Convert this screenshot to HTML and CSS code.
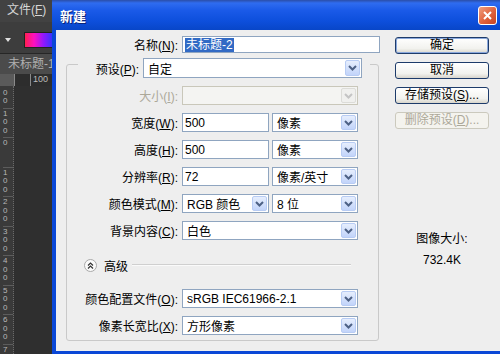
FILE: index.html
```html
<!DOCTYPE html>
<html lang="zh-CN">
<head>
  <meta charset="UTF-8">
  <title>新建</title>
  <link rel="stylesheet" href="styles.css">
</head>
<body>
  <div class="screen">
    <div class="ps">
      <div class="ps-menu">文件(<u>F</u>)</div>
      <div class="ps-tools"><span class="caret"></span><span class="swatch"></span></div>
      <div class="ps-tab">未标题-1</div>
      <div class="ps-hruler">
        <span class="corner"></span>
        <span class="tick"></span>
        <span class="tick t100">100</span>
      </div>
      <div class="ps-work">
        <div class="vruler">
          <div class="vmark first">2<br>0<br>0</div>
          <div class="vmark">1<br>0<br>0</div>
          <div class="vmark">0</div>
          <div class="vmark">1<br>0<br>0</div>
          <div class="vmark">2<br>0<br>0</div>
          <div class="vmark">3<br>0<br>0</div>
          <div class="vmark">4<br>0<br>0</div>
          <div class="vmark">5<br>0<br>0</div>
          <div class="vmark">6<br>0<br>0</div>
          <div class="vmark">7<br>0<br>0</div>
        </div>
        <div class="canvas"></div>
      </div>
    </div>

    <div class="dialog">
      <div class="titlebar">
        <span class="title">新建</span>
        <span class="close">
          <svg width="9" height="9" viewBox="0 0 9 9"><path d="M1 1l7 7M8 1l-7 7" stroke="#fff" stroke-width="2"/></svg>
        </span>
      </div>

      <div class="dlg-body">
        <div class="pane">
          <div class="row name-row">
            <span class="lbl">名称(<u>N</u>):</span>
            <div class="field name-field"><span class="sel">未标题-2</span></div>
          </div>

          <div class="group">
            <div class="row preset-row">
              <span class="lbl">预设(<u>P</u>):</span>
              <div class="combo preset"><span>自定</span><i class="arr"><svg width="9" height="6" viewBox="0 0 9 6"><path d="M1 1l3.5 3.5L8 1" fill="none" stroke="#4d6185" stroke-width="2"/></svg></i></div>
            </div>

            <div class="row off">
              <span class="lbl">大小(<u>I</u>):</span>
              <div class="combo wide disabled"><span></span><i class="arr"><svg width="9" height="6" viewBox="0 0 9 6"><path d="M1 1l3.5 3.5L8 1" fill="none" stroke="#c4c4c4" stroke-width="2"/></svg></i></div>
            </div>

            <div class="row">
              <span class="lbl">宽度(<u>W</u>):</span>
              <div class="field half">500</div>
              <div class="combo half unit"><span>像素</span><i class="arr"><svg width="9" height="6" viewBox="0 0 9 6"><path d="M1 1l3.5 3.5L8 1" fill="none" stroke="#4d6185" stroke-width="2"/></svg></i></div>
            </div>

            <div class="row">
              <span class="lbl">高度(<u>H</u>):</span>
              <div class="field half">500</div>
              <div class="combo half unit"><span>像素</span><i class="arr"><svg width="9" height="6" viewBox="0 0 9 6"><path d="M1 1l3.5 3.5L8 1" fill="none" stroke="#4d6185" stroke-width="2"/></svg></i></div>
            </div>

            <div class="row">
              <span class="lbl">分辨率(<u>R</u>):</span>
              <div class="field half">72</div>
              <div class="combo half unit"><span>像素/英寸</span><i class="arr"><svg width="9" height="6" viewBox="0 0 9 6"><path d="M1 1l3.5 3.5L8 1" fill="none" stroke="#4d6185" stroke-width="2"/></svg></i></div>
            </div>

            <div class="row">
              <span class="lbl">颜色模式(<u>M</u>):</span>
              <div class="combo half"><span>RGB 颜色</span><i class="arr"><svg width="9" height="6" viewBox="0 0 9 6"><path d="M1 1l3.5 3.5L8 1" fill="none" stroke="#4d6185" stroke-width="2"/></svg></i></div>
              <div class="combo half unit"><span>8 位</span><i class="arr"><svg width="9" height="6" viewBox="0 0 9 6"><path d="M1 1l3.5 3.5L8 1" fill="none" stroke="#4d6185" stroke-width="2"/></svg></i></div>
            </div>

            <div class="row">
              <span class="lbl">背景内容(<u>C</u>):</span>
              <div class="combo wide"><span>白色</span><i class="arr"><svg width="9" height="6" viewBox="0 0 9 6"><path d="M1 1l3.5 3.5L8 1" fill="none" stroke="#4d6185" stroke-width="2"/></svg></i></div>
            </div>

            <div class="adv">
              <svg width="13" height="13" viewBox="0 0 13 13"><circle cx="6.5" cy="6.5" r="6" fill="#fafafa" stroke="#a8a8a8"/><path d="M4 6.5l2.5-2.5L9 6.5M4 9.5l2.5-2.5L9 9.5" fill="none" stroke="#333" stroke-width="1.2"/></svg>
              <span class="adv-text">高级</span>
              <span class="adv-line"></span>
            </div>

            <div class="row profile">
              <span class="lbl">颜色配置文件(<u>O</u>):</span>
              <div class="combo wide"><span>sRGB IEC61966-2.1</span><i class="arr"><svg width="9" height="6" viewBox="0 0 9 6"><path d="M1 1l3.5 3.5L8 1" fill="none" stroke="#4d6185" stroke-width="2"/></svg></i></div>
            </div>

            <div class="row">
              <span class="lbl">像素长宽比(<u>X</u>):</span>
              <div class="combo wide"><span>方形像素</span><i class="arr"><svg width="9" height="6" viewBox="0 0 9 6"><path d="M1 1l3.5 3.5L8 1" fill="none" stroke="#4d6185" stroke-width="2"/></svg></i></div>
            </div>
          </div>
        </div>

        <div class="side">
          <button class="btn default">确定</button>
          <button class="btn">取消</button>
          <button class="btn">存储预设(<u>S</u>)...</button>
          <button class="btn" disabled>删除预设(<u>D</u>)...</button>
          <div class="info">
            <div>图像大小:</div>
            <div class="size">732.4K</div>
          </div>
        </div>
      </div>
    </div>
  </div>
</body>
</html>
```

FILE: styles.css
```css
* {
  box-sizing: border-box;
}
body {
  margin: 0;
  width: 500px;
  height: 354px;
  overflow: hidden;
  background: #2e2e2e;
  font-family: "Liberation Sans", "Noto Sans CJK SC", sans-serif;
  font-size: 12px;
}
.screen {
  display: flex;
  height: 354px;
}

/* photoshop behind the dialog */
.ps {
  width: 52px;
  flex: none;
  display: flex;
  flex-direction: column;
  overflow: hidden;
  color: #d6d6d6;
}
.ps > div {
  flex: none;
}
.ps-menu {
  height: 22px;
  background: #424242;
  padding: 3px 0 0 7px;
  line-height: 15px;
  white-space: nowrap;
}
.ps-tools {
  height: 32px;
  background: #3d3d3d;
  border-bottom: 1px solid #262626;
  display: flex;
  align-items: center;
  padding: 4px 0 0 5px;
}
.caret {
  width: 0;
  border-left: 3px solid transparent;
  border-right: 3px solid transparent;
  border-top: 4px solid #e0e0e0;
}
.swatch {
  width: 32px;
  height: 16px;
  margin-left: 13px;
  flex: none;
  border: 1px solid #222;
  background: linear-gradient(90deg, #ff2050, #ff10c0 30%, #9018ff 62%, #1a3cff);
}
.ps-tab {
  height: 20px;
  background: #4b4b4b;
  color: #b0b0b0;
  padding-left: 8px;
  line-height: 20px;
  white-space: nowrap;
}
.ps-hruler {
  height: 12px;
  background: #2d2d2d;
  display: flex;
  font-size: 9px;
  color: #bcbcbc;
  line-height: 11px;
}
.corner {
  width: 14px;
  background: #5a5a5a;
}
.tick {
  width: 16px;
  border-left: 1px solid #8a8a8a;
  padding-left: 2px;
}
.ps .ps-work {
  flex: 1;
  min-height: 0;
  overflow: hidden;
  display: flex;
}
.vruler {
  width: 14px;
  background: #3a3a3a;
  border-right: 1px dotted #6a6a6a;
  overflow: hidden;
  font-size: 8px;
  line-height: 8.5px;
  color: #b8b8b8;
  padding-left: 3px;
}
.vmark {
  height: 29.5px;
  border-top: 1px solid #5c5c5c;
  padding-top: 1px;
}
.vmark.first {
  margin-top: -8px;
}
.canvas {
  flex: 1;
  background: #2f2f2f;
}

/* the dialog window */
.dialog {
  width: 452px;
  flex: none;
  height: 354px;
  display: flex;
  flex-direction: column;
  background: #eeeeee;
  border-left: 4px solid #0a47d6;
  border-bottom: 3px solid #0a47d6;
  color: #000;
}
.titlebar {
  height: 30px;
  flex: none;
  margin-left: -4px;
  display: flex;
  align-items: center;
  justify-content: space-between;
  padding: 0 7px 0 8px;
  background: linear-gradient(#2b4ea8 0, #2f6cf0 10%, #1a5ae8 35%, #0d4fdc 70%, #0846c8 100%);
}
.title {
  color: #fff;
  font-weight: bold;
  font-size: 13px;
  text-shadow: 1px 1px #0a2478;
}
.close {
  width: 19px;
  height: 19px;
  border: 1px solid #fff;
  border-radius: 3px;
  background: linear-gradient(135deg, #f0a080, #e0613c 55%, #c84420);
  display: flex;
  align-items: center;
  justify-content: center;
}
.dlg-body {
  flex: 1;
  display: flex;
}

.pane {
  width: 324px;
  padding-left: 10px;
}
.row {
  display: flex;
  align-items: center;
  height: 19px;
  margin-top: 8px;
}
.lbl {
  width: 115px;
  flex: none;
  text-align: right;
  padding-right: 4px;
  white-space: nowrap;
}
.name-row {
  margin-top: 6px;
  height: 17px;
}
.name-row .lbl {
  width: 116px;
}
.field {
  height: 100%;
  background: #fff;
  border: 1px solid #8fa5c0;
  padding-left: 2px;
  display: flex;
  align-items: center;
}
.name-field {
  width: 198px;
}
.sel {
  background: #316ac5;
  color: #fff;
  padding: 0 1px;
  line-height: 14px;
}
.half {
  width: 87px;
  flex: none;
}
.unit {
  margin-left: 3px;
  width: 86px;
}
.wide {
  width: 176px;
}

.group {
  margin-top: 11px;
  width: 313px;
  border: 1px solid #c9c9c9;
  border-radius: 3px;
  padding-bottom: 5px;
}
.preset-row {
  margin: -7px 0 0 11px;
  width: 292px;
  height: 20px;
  background: #eeeeee;
}
.preset-row .lbl {
  width: 65px;
}
.preset {
  width: 219px;
}

.combo {
  height: 100%;
  background: #fff;
  border: 1px solid #8fa5c0;
  display: flex;
  align-items: center;
  justify-content: space-between;
  padding: 1px;
  padding-left: 4px;
  white-space: nowrap;
}
.arr {
  width: 15px;
  height: 100%;
  border: 1px solid #b8ccf4;
  border-radius: 2px;
  background: linear-gradient(#e6eefd, #c2d4fa);
  display: flex;
  align-items: center;
  justify-content: center;
}
.off .lbl {
  color: #aca899;
}
.combo.disabled {
  background: #f4f4f2;
  border-color: #c9c7ba;
}
.combo.disabled .arr {
  background: #f0f0ee;
  border-color: #dcdcd8;
}

.adv {
  display: flex;
  align-items: center;
  height: 14px;
  margin: 18px 0 0 17px;
}
.adv-text {
  margin-left: 7px;
}
.adv-line {
  width: 219px;
  margin-left: 4px;
  border-top: 1px solid #cfcfcf;
  border-bottom: 1px solid #fafafa;
}
.profile {
  margin-top: 17px;
}

/* buttons on the right */
.side {
  width: 94px;
  margin-left: 15px;
  padding-top: 7px;
  display: flex;
  flex-direction: column;
  gap: 8px;
}
.btn {
  height: 17px;
  padding: 0;
  border: 1px solid #1d3b6a;
  border-radius: 3px;
  background: linear-gradient(#ffffff, #f2f2ee 70%, #d8d5cc);
  font-family: "Liberation Sans", "Noto Sans CJK SC", sans-serif;
  font-size: 12px;
  color: #000;
  line-height: 15px;
}
.btn.default {
  box-shadow: inset 0 0 0 1px #8aa8dc;
}
.btn:disabled {
  border-color: #cbc9bd;
  color: #aca899;
  background: #f4f3ee;
}
.info {
  margin-top: 95px;
  text-align: center;
  line-height: 15px;
}
.size {
  margin-top: 6px;
}
```
